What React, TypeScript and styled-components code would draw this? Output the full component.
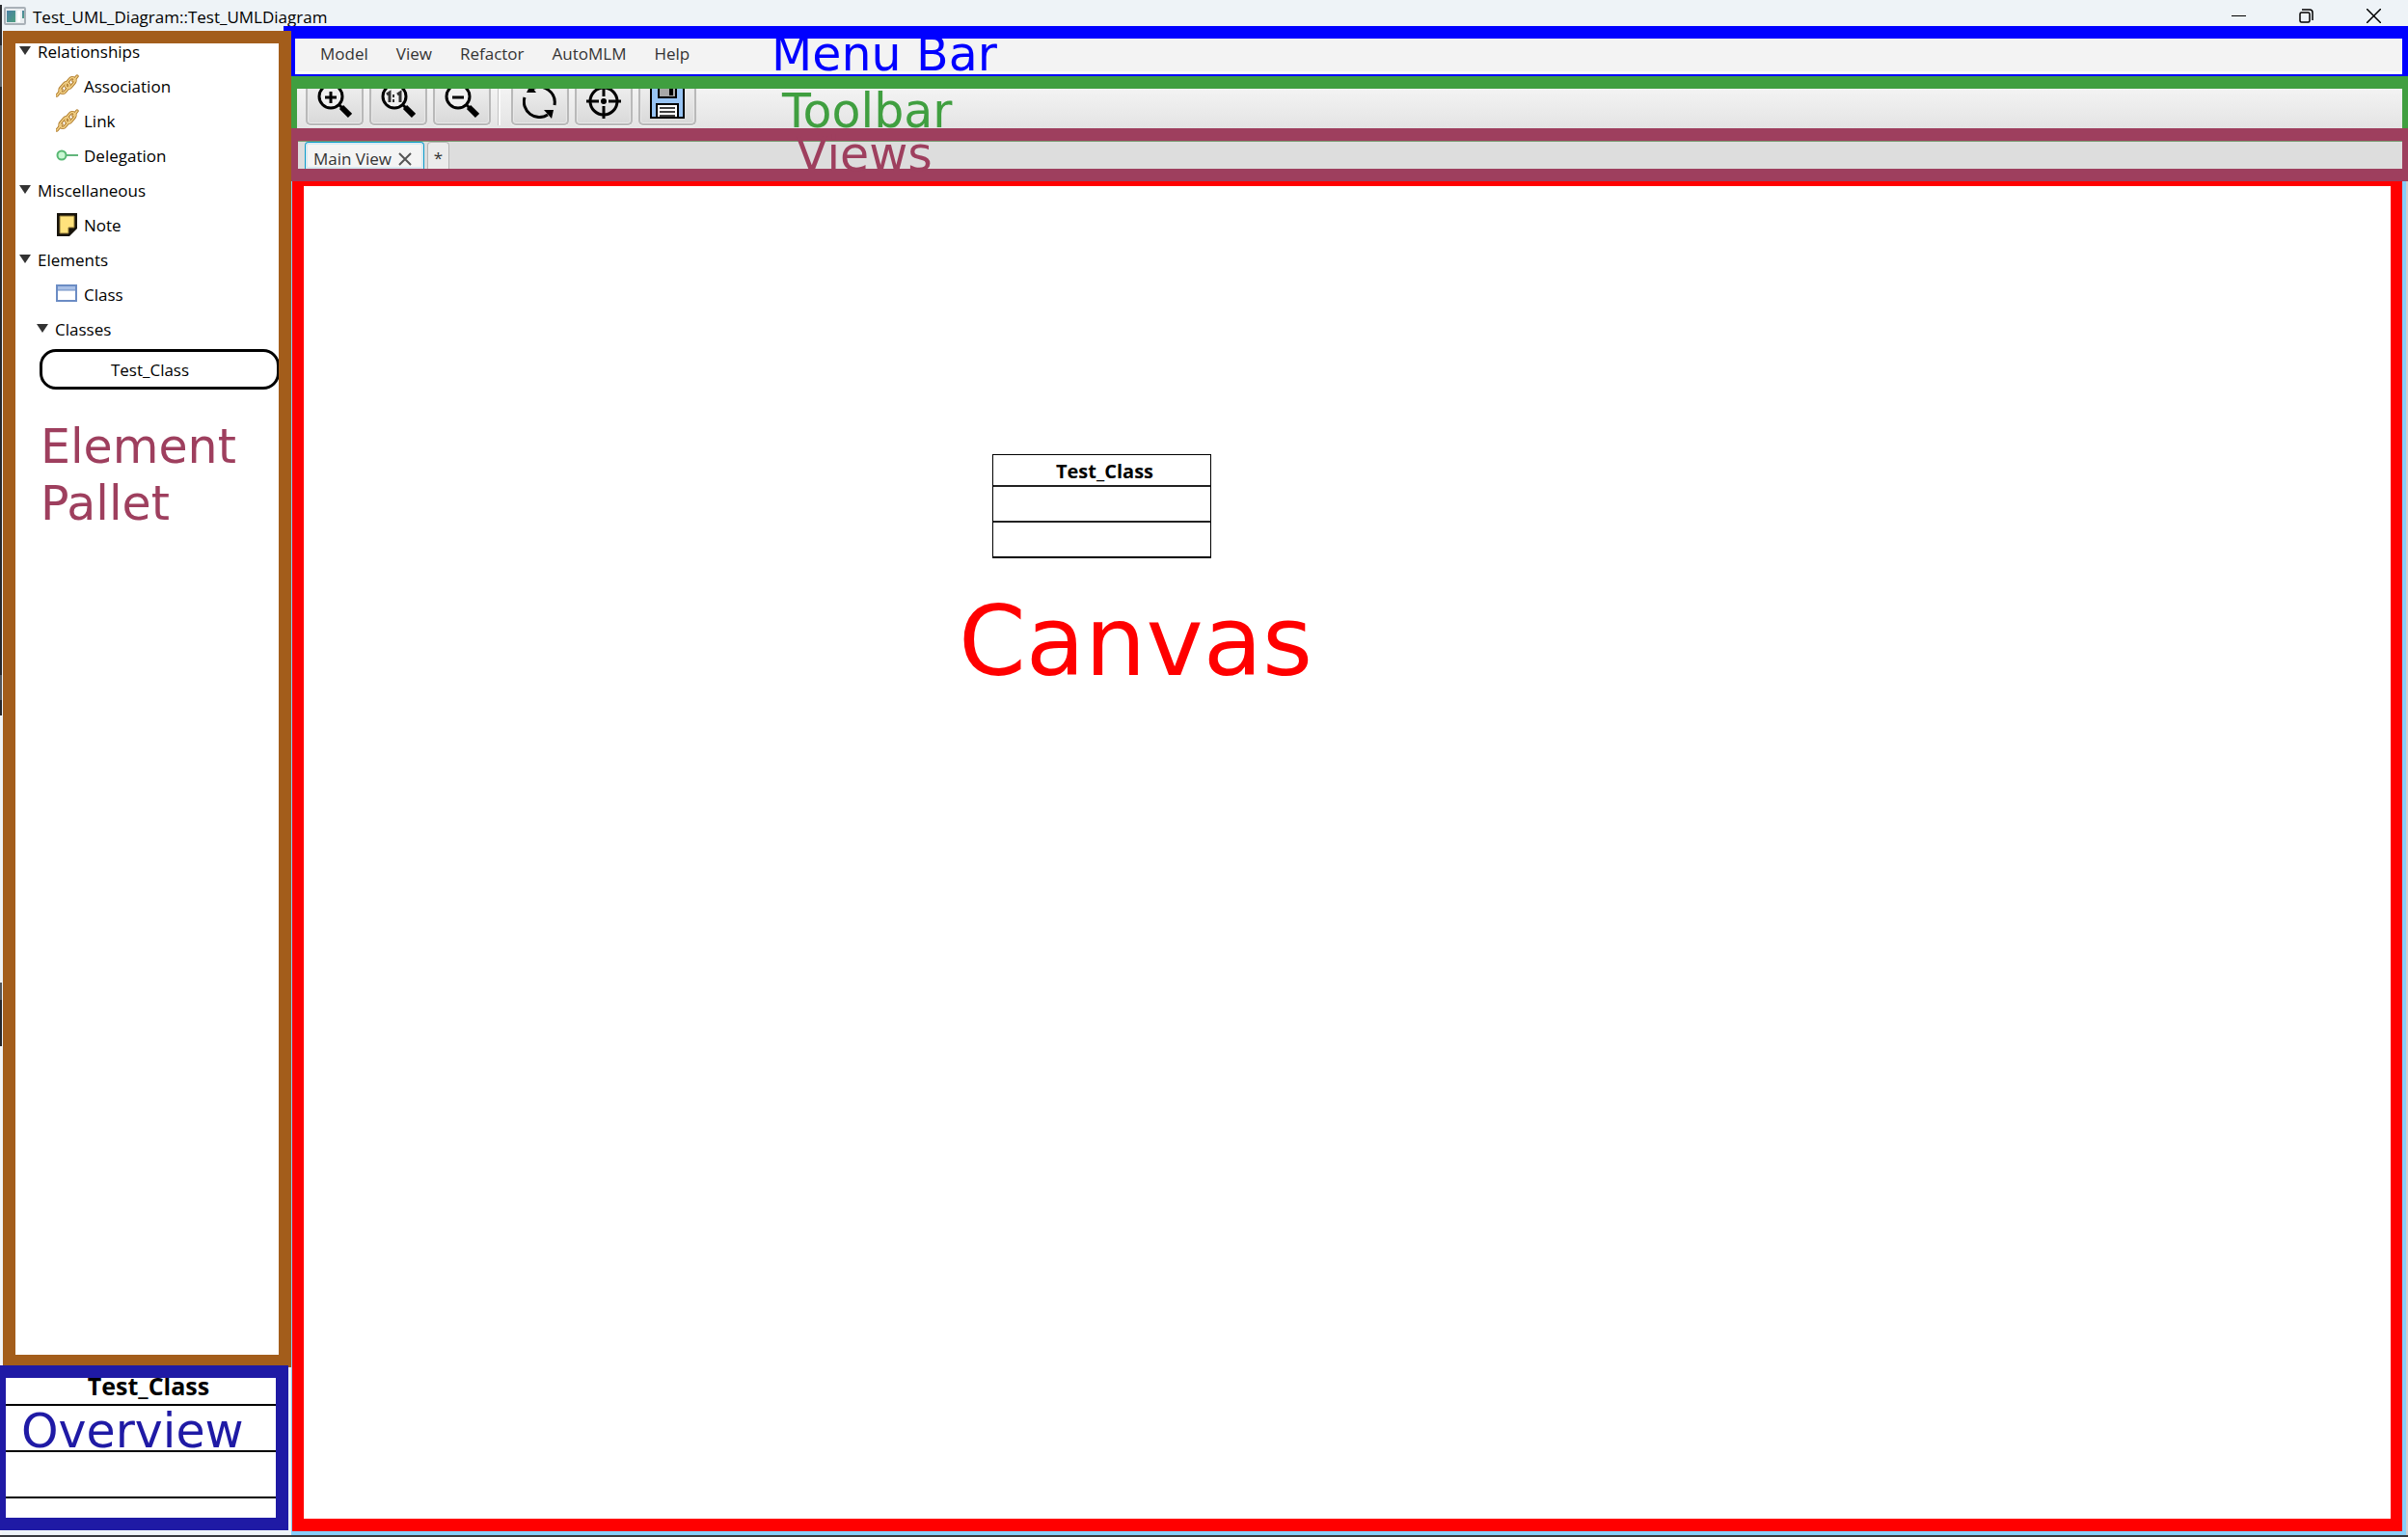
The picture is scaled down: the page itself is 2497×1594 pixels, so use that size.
import React from 'react';
import styled, { createGlobalStyle } from 'styled-components';

const uiFont = '"Open Sans", "Noto Sans", sans-serif';
const frame = {
  menu: '#0000ff',
  toolbar: '#409f40',
  views: '#9e3f5e',
  canvas: '#ff0000',
  palette: '#a35d1b',
  overview: '#1f1aa5',
};

const GlobalStyle = createGlobalStyle`
  *, *::before, *::after { box-sizing: border-box; }
  body { margin: 0; background: #eef3f7; font-family: ${uiFont}; font-size: 17px; color: #000; }
  button { font: inherit; color: inherit; border: 0; padding: 0; margin: 0; background: none; }
  ul { list-style: none; margin: 0; padding: 0; }
  svg { display: block; flex: none; }
`;

const Window = styled.div`
  position: relative;
  display: flex;
  flex-direction: column;
  min-height: 100vh;
  border-bottom: 2px solid #37383c;
`;

const DesktopEdge = styled.div`
  position: absolute;
  left: 0;
  top: 0;
  bottom: 0;
  width: 2px;
  background: linear-gradient(#eef3f7 0 5px, #2a2a2e 5px 47px, #606468 47px 90px, #26272b 90px 700px, #55565a 700px 726px, #26272b 726px 742px, #f0f2f4 742px 1019px, #55565a 1019px 1037px, #26272b 1037px 1085px, #f4f4f6 1085px);
`;

const TitleBar = styled.header`
  display: flex;
  align-items: center;
  height: 27px;
  padding: 0 1px 0 4px;
`;

const Title = styled.h1`
  flex: 1;
  margin: 0;
  padding: 8px 0 0 7px;
  font-size: 17px;
  font-weight: 400;
  line-height: 24px;
`;

const TitleIcon = styled.svg`
  margin-top: 6px;
`;

const WindowButton = styled.button`
  display: flex;
  align-items: center;
  justify-content: center;
  width: 70px;
  height: 27px;
  padding-top: 6px;
`;

const Body = styled.div`
  flex: 1;
  display: grid;
  grid-template-columns: 302px minmax(0, 1fr);
`;

const Sidebar = styled.aside`
  position: relative;
  z-index: 1;
  display: flex;
  flex-direction: column;
  padding: 5px 0;
`;

const Palette = styled.nav`
  position: relative;
  flex: 1;
  margin-left: 3px;
  border: 13px solid ${frame.palette};
  background: #fff;
  overflow: hidden;
`;

const Tree = styled.ul`
  margin-top: -10px;
`;

const Branch = styled.button<{ $depth: number }>`
  display: flex;
  align-items: center;
  gap: 7px;
  width: 100%;
  height: 36px;
  padding-left: ${(p) => 4 + p.$depth * 18}px;
`;

const Leaf = styled.button`
  display: flex;
  align-items: center;
  gap: 5px;
  width: 100%;
  height: 36px;
  padding-left: 42px;
`;

const ClassPill = styled.button`
  width: 249px;
  height: 42px;
  margin: 3px 0 0 25px;
  padding-right: 20px;
  border: 3px solid #000;
  border-radius: 17px;
`;

const Overview = styled.section`
  position: relative;
  height: 171px;
  margin: -2px 3px 0 0;
  border: 13px solid ${frame.overview};
  border-left-width: 6px;
  background: #fff;
  overflow: hidden;
`;

const MiniName = styled.div`
  height: 29px;
  border-bottom: 2px solid #000;
  padding-left: 16px;
  font-size: 25px;
  font-weight: 700;
  line-height: 16px;
  text-align: center;
`;

const MiniRow = styled.div`
  height: 48px;
  border-bottom: 2px solid #000;
`;

const Main = styled.main`
  display: flex;
  flex-direction: column;
  min-width: 0;
`;

const MenuBar = styled.nav`
  position: relative;
  display: flex;
  gap: 1px;
  height: 52px;
  margin-left: -8px;
  padding: 0 0 4px 12px;
  border: solid ${frame.menu};
  border-width: 13px 6px 2px 12px;
  background: linear-gradient(#f3f3f3 0 34px, #fcfcfc 34px);
`;

const MenuItem = styled.button`
  height: 31px;
  padding: 0 14px;
  line-height: 31px;
  color: #333;
`;

const Toolbar = styled.div`
  position: relative;
  display: flex;
  gap: 6px;
  height: 54px;
  padding: 0 0 3px 9px;
  border: solid ${frame.toolbar};
  border-width: 13px 6px 0 6px;
  background: linear-gradient(#f3f3f3, #e4e4e4);
`;

const ToolButton = styled.button`
  display: flex;
  align-items: flex-end;
  justify-content: center;
  width: 60px;
  height: 38px;
  padding-bottom: 5px;
  border: 2px solid #b9b9b9;
  border-top: 0;
  border-radius: 0 0 5px 5px;
  background: linear-gradient(#ededed, #d9d9d9);
  box-shadow: inset 0 0 0 1px #e8e8e8, 0 1px 0 #f8f8f8;
  overflow: hidden;
`;

const Separator = styled.div`
  width: 3px;
  height: 38px;
  margin: 0 5px 0 1px;
  border: solid #c4c4c4;
  border-width: 0 0 0 1px;
  background: #fafafa;
`;

const Tabs = styled.div`
  position: relative;
  display: flex;
  gap: 3px;
  height: 55px;
  padding-left: 7px;
  border: solid ${frame.views};
  border-width: 13px 6px 13px 7px;
  background: #ddd;
  box-shadow: inset 0 1px 0 #78966e;
`;

const MainTab = styled.div`
  display: flex;
  align-items: center;
  gap: 7px;
  height: 28px;
  margin-top: 1px;
  padding: 6px 12px 0 8px;
  border: solid #0d9ccb;
  border-width: 1px 1px 0;
  border-radius: 4px 4px 0 0;
  background: #f4f4f4;
  box-shadow: inset 0 0 0 2px #d8e9f0;
  color: #333;
`;

const NewTab = styled.button`
  height: 28px;
  width: 23px;
  margin-top: 1px;
  padding-top: 4px;
  border: solid #b5b5b5;
  border-width: 1px 1px 0;
  border-radius: 4px 4px 0 0;
  background: #ebebeb;
  color: #333;
`;

const CanvasEdge = styled.div`
  flex: 1;
  display: flex;
  padding: 0 6px 4px 1px;
  background: linear-gradient(90deg, #87cefa 0 calc(100% - 2px), #cfcfcf calc(100% - 2px));
`;

const Canvas = styled.section`
  position: relative;
  flex: 1;
  border: solid ${frame.canvas};
  border-width: 5px 12px 13px 12px;
  background: #fff;
`;

const UmlClass = styled.div`
  position: absolute;
  left: 714px;
  top: 278px;
  width: 227px;
  border: 1px solid #000;
  border-bottom-width: 2px;
`;

const UmlName = styled.div`
  height: 31px;
  padding-left: 6px;
  font-size: 20px;
  font-weight: 700;
  line-height: 33px;
  text-align: center;
`;

const UmlRow = styled.div`
  height: 37px;
  border-top: 2px solid #222;
`;

const Note = styled.div<{ $x: number; $y: number; $color: string; $large?: boolean }>`
  position: absolute;
  left: ${(p) => p.$x}px;
  top: ${(p) => p.$y}px;
  color: ${(p) => p.$color};
  font-family: "DejaVu Sans", sans-serif;
  font-size: ${(p) => (p.$large ? 100 : 49)}px;
  line-height: ${(p) => (p.$large ? 120 : 59)}px;
  white-space: nowrap;
  pointer-events: none;
`;

const Arrow = () => (
  <svg width="12" height="10" viewBox="0 0 12 10"><path d="M0 0H12L6 9Z" fill="#333" /></svg>
);

const ChainLinks = () => (
  <>
    <path d="M1 22L6 16M18 7L22 2" />
    <rect x="-6" y="-3" width="12" height="6" rx="3" transform="translate(9 14) rotate(-50)" />
    <rect x="-6" y="-3" width="12" height="6" rx="3" transform="translate(15 9) rotate(-50)" />
  </>
);

const ChainIcon = () => (
  <svg width="24" height="24" viewBox="0 0 24 24" fill="none" strokeLinecap="round">
    <g stroke="#b07c2c" strokeWidth="3.500"><ChainLinks /></g>
    <g stroke="#f1cf85" strokeWidth="1.500"><ChainLinks /></g>
  </svg>
);

const DelegationIcon = () => (
  <svg width="24" height="24" viewBox="0 0 24 24">
    <path d="M10 12H23" stroke="#62b67c" strokeWidth="2" />
    <circle cx="6" cy="12" r="4.500" fill="#c9f7d2" stroke="#58b873" strokeWidth="2" />
  </svg>
);

const NoteIcon = () => (
  <svg width="24" height="24" viewBox="0 0 24 24">
    <path d="M1 0H22V16L14 24H1Z" fill="#17130a" />
    <path d="M4 3H19V15H13V21H4Z" fill="#ffe27c" stroke="#8a7536" strokeWidth="1" />
  </svg>
);

const ClassIcon = () => (
  <svg width="24" height="24" viewBox="0 0 24 24">
    <rect x="1" y="3" width="20" height="16" fill="#fff" stroke="#6b8cc4" strokeWidth="2" />
    <rect x="2" y="4" width="18" height="4" fill="#a9c0e6" />
    <path d="M1 8H21" stroke="#6b8cc4" strokeWidth="1" />
  </svg>
);

const LensIcon = ({ kind }: { kind: 'in' | 'one' | 'out' }) => (
  <svg width="36" height="36" viewBox="0 0 36 36" fill="none" stroke="#000">
    <circle cx="14" cy="13" r="12" strokeWidth="3" fill="#f0f0f0" />
    <path d="M22 21L26 25" strokeWidth="3" />
    <path d="M25 24L34 33" strokeWidth="6" />
    {kind !== 'one' && <path d="M8 14H20" strokeWidth="3" />}
    {kind === 'in' && <path d="M14 8V20" strokeWidth="3" />}
    {kind === 'one' && (
      <g stroke="#333">
        <path d="M6 11L9 9V19M17 11L20 9V19" strokeWidth="3" />
        <path d="M13 11V14M13 16V19" strokeWidth="2" />
      </g>
    )}
  </svg>
);

const RefreshIcon = () => (
  <svg width="36" height="36" viewBox="0 0 36 36" fill="none" stroke="#000" strokeWidth="3">
    <path d="M2 14A16 16 0 0 0 26 32M10 5A16 16 0 0 1 33 22" />
    <path d="M4 9L8 1L14 9ZM22 27H32L30 36Z" fill="#000" stroke="none" />
  </svg>
);

const TargetIcon = () => (
  <svg width="36" height="36" viewBox="0 0 36 36" fill="none" stroke="#000" strokeWidth="3">
    <circle cx="18" cy="18" r="14" />
    <path d="M18 0V13M18 23V36M0 18H13M23 18H36" />
    <circle cx="18" cy="18" r="3" fill="#000" stroke="none" />
  </svg>
);

const SaveIcon = () => (
  <svg width="36" height="36" viewBox="0 0 36 36" stroke="#000" strokeWidth="2">
    <path d="M1 1H31L35 5V35H1Z" fill="#98c4f4" />
    <path d="M9 1H27V14H9Z" fill="#a8a8a8" />
    <path d="M20 3H24V12H20Z" fill="#000" stroke="none" />
    <path d="M7 21H29V35H7Z" fill="#fff" />
    <path d="M10 25H26M10 29H26M10 33H26" strokeWidth="1.500" />
  </svg>
);

const menus = ['Model', 'View', 'Refactor', 'AutoMLM', 'Help'];

export default function App() {
  return (
    <>
      <GlobalStyle />
      <Window>
        <DesktopEdge />
        <TitleBar>
          <TitleIcon width="23" height="19" viewBox="0 0 23 19">
            <defs>
              <linearGradient id="appTile" x1="0" y1="0" x2="1" y2="1">
                <stop offset="0" stopColor="#4a7fa6" />
                <stop offset="1" stopColor="#4fa07f" />
              </linearGradient>
            </defs>
            <rect x="1" y="1" width="21" height="17" rx="1" fill="#e9edf0" stroke="#a9b1b8" strokeWidth="2" />
            <rect x="3" y="4" width="9" height="12" fill="url(#appTile)" />
            <rect x="14" y="4" width="3" height="12" fill="#fff" />
            <rect x="19" y="4" width="2" height="8" fill="url(#appTile)" />
          </TitleIcon>
          <Title>Test_UML_Diagram::Test_UMLDiagram</Title>
          <WindowButton aria-label="Minimize">
            <svg width="15" height="15" viewBox="0 0 15 15"><path d="M0 7.500H15" stroke="#000" /></svg>
          </WindowButton>
          <WindowButton aria-label="Restore">
            <svg width="15" height="15" viewBox="0 0 15 15" fill="none" stroke="#000" strokeWidth="1.500">
              <rect x="1" y="4" width="10" height="10" rx="1.500" />
              <path d="M3 1H11Q14 1 14 4V12" />
            </svg>
          </WindowButton>
          <WindowButton aria-label="Close">
            <svg width="15" height="15" viewBox="0 0 15 15"><path d="M0 0L15 15M15 0L0 15" stroke="#000" strokeWidth="1.500" /></svg>
          </WindowButton>
        </TitleBar>
        <Body>
          <Sidebar>
            <Palette>
              <Tree>
                <li>
                  <Branch $depth={0}><Arrow />Relationships</Branch>
                  <ul>
                    <li><Leaf><ChainIcon />Association</Leaf></li>
                    <li><Leaf><ChainIcon />Link</Leaf></li>
                    <li><Leaf><DelegationIcon />Delegation</Leaf></li>
                  </ul>
                </li>
                <li>
                  <Branch $depth={0}><Arrow />Miscellaneous</Branch>
                  <ul>
                    <li><Leaf><NoteIcon />Note</Leaf></li>
                  </ul>
                </li>
                <li>
                  <Branch $depth={0}><Arrow />Elements</Branch>
                  <ul>
                    <li><Leaf><ClassIcon />Class</Leaf></li>
                    <li>
                      <Branch $depth={1}><Arrow />Classes</Branch>
                      <ClassPill>Test_Class</ClassPill>
                    </li>
                  </ul>
                </li>
              </Tree>
              <Note $x={26} $y={389} $color={frame.views}>Element<br />Pallet</Note>
            </Palette>
            <Overview>
              <MiniName>Test_Class</MiniName>
              <MiniRow />
              <MiniRow />
              <Note $x={16} $y={26} $color={frame.overview}>Overview</Note>
            </Overview>
          </Sidebar>
          <Main>
            <MenuBar>
              {menus.map((m) => <MenuItem key={m}>{m}</MenuItem>)}
              <Note $x={494} $y={-13} $color={frame.menu}>Menu Bar</Note>
            </MenuBar>
            <Toolbar>
              <ToolButton aria-label="Zoom in"><LensIcon kind="in" /></ToolButton>
              <ToolButton aria-label="Actual size"><LensIcon kind="one" /></ToolButton>
              <ToolButton aria-label="Zoom out"><LensIcon kind="out" /></ToolButton>
              <Separator />
              <ToolButton aria-label="Refresh"><RefreshIcon /></ToolButton>
              <ToolButton aria-label="Center"><TargetIcon /></ToolButton>
              <ToolButton aria-label="Save"><SaveIcon /></ToolButton>
              <Note $x={503} $y={-6} $color={frame.toolbar}>Toolbar</Note>
            </Toolbar>
            <Tabs>
              <MainTab>
                Main View
                <button aria-label="Close tab">
                  <svg width="14" height="14" viewBox="0 0 14 14"><path d="M1 1L13 13M13 1L1 13" stroke="#555" strokeWidth="2" /></svg>
                </button>
              </MainTab>
              <NewTab>*</NewTab>
              <Note $x={516} $y={-15} $color={frame.views}>Views</Note>
            </Tabs>
            <CanvasEdge>
              <Canvas>
                <UmlClass>
                  <UmlName>Test_Class</UmlName>
                  <UmlRow />
                  <UmlRow />
                </UmlClass>
                <Note $x={679} $y={413} $color={frame.canvas} $large>Canvas</Note>
              </Canvas>
            </CanvasEdge>
          </Main>
        </Body>
      </Window>
    </>
  );
}
